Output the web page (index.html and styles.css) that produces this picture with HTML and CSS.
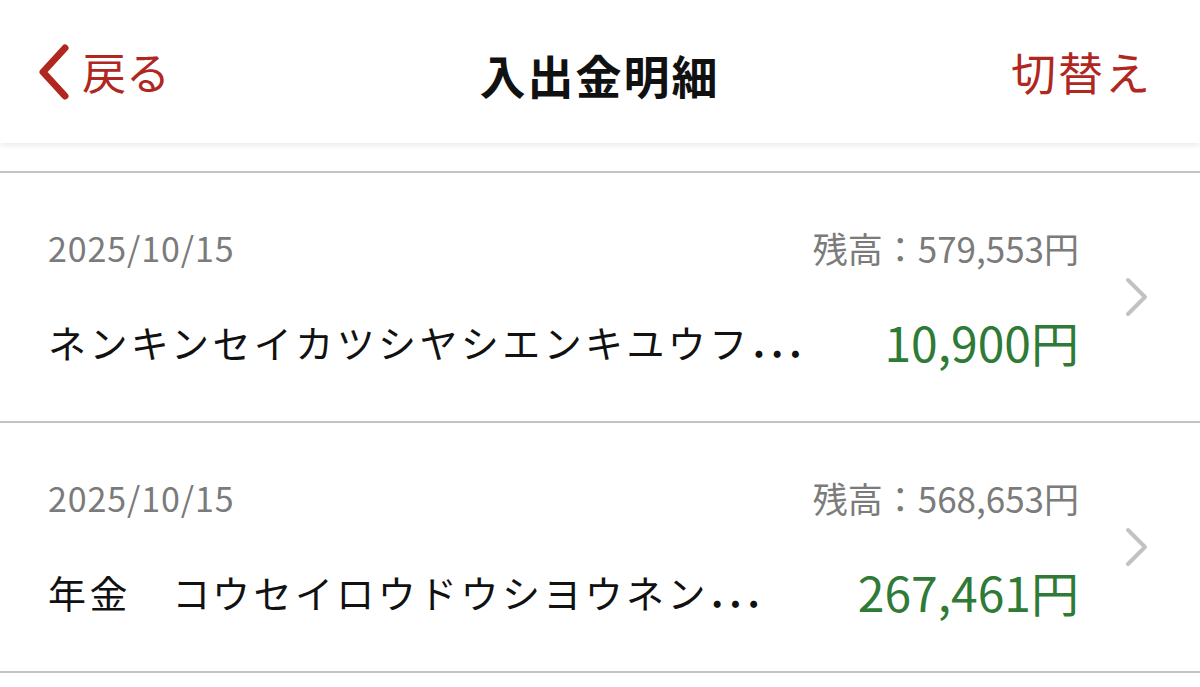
FILE: index.html
```html
<!DOCTYPE html>
<html lang="ja">
<head>
<meta charset="utf-8">
<title>入出金明細</title>
<link rel="stylesheet" href="styles.css">
</head>
<body>
<header class="header">
  <a class="back">
    <svg class="back-icon" width="36" height="58" viewBox="0 0 36 58"><path d="M30 5 L8 29 L30 53" fill="none" stroke="#b0271f" stroke-width="7" stroke-linecap="round" stroke-linejoin="round"/></svg>
    <span class="back-label">戻る</span>
  </a>
  <h1 class="title">入出金明細</h1>
  <a class="switch">切替え</a>
</header>
<div class="spacer"></div>
<ul class="list">
  <li class="item">
    <div class="item-main">
      <div class="line line-top">
        <span class="date">2025/10/15</span>
        <span class="balance">残高：579,553円</span>
      </div>
      <div class="line line-bottom">
        <span class="name">ネンキンセイカツシヤシエンキユウフ<span class="dots">...</span></span>
        <span class="amount">10,900円</span>
      </div>
    </div>
    <svg class="chev" width="26" height="40" viewBox="0 0 26 40"><path d="M4 3 L21 20 L4 37" fill="none" stroke="#c2c2c2" stroke-width="4" stroke-linecap="round" stroke-linejoin="round"/></svg>
  </li>
  <li class="item">
    <div class="item-main">
      <div class="line line-top">
        <span class="date">2025/10/15</span>
        <span class="balance">残高：568,653円</span>
      </div>
      <div class="line line-bottom">
        <span class="name">年金　コウセイロウドウシヨウネン<span class="dots">...</span></span>
        <span class="amount">267,461円</span>
      </div>
    </div>
    <svg class="chev" width="26" height="40" viewBox="0 0 26 40"><path d="M4 3 L21 20 L4 37" fill="none" stroke="#c2c2c2" stroke-width="4" stroke-linecap="round" stroke-linejoin="round"/></svg>
  </li>
</ul>
</body>
</html>
```

FILE: styles.css
```css
* { box-sizing: border-box; }
html, body {
  margin: 0;
  padding: 0;
  background: #ffffff;
  font-family: "Noto Sans CJK JP", "Noto Sans", sans-serif;
}
.header {
  height: 143px;
  display: flex;
  align-items: center;
  justify-content: space-between;
  padding: 0 48px 0 35px;
  background: #fff;
  box-shadow: 0 2px 6px rgba(0, 0, 0, 0.09);
  position: relative;
  z-index: 1;
}
.back {
  display: flex;
  align-items: center;
  gap: 11px;
  color: #b0271f;
  font-size: 44px;
  line-height: 1;
  width: 240px;
}
.back-icon { display: block; margin-top: 0; }
.back-label { margin-top: -2px; }
.title {
  margin: 0 0 0 12px;
  font-size: 46px;
  font-weight: 700;
  color: #111;
  line-height: 1;
  letter-spacing: 2px;
  margin-top: 4px;
}
.switch {
  width: 240px;
  text-align: right;
  color: #b0271f;
  font-size: 45px;
  line-height: 1;
  letter-spacing: 2px;
}
.spacer {
  height: 28px;
}
.list {
  list-style: none;
  margin: 0;
  padding: 0;
  border-top: 2px solid #c3c3c3;
}
.item {
  height: 250px;
  display: flex;
  align-items: center;
  border-bottom: 2px solid #c3c3c3;
  padding-left: 48px;
}
.item-main {
  flex: 1;
  min-width: 0;
  display: flex;
  flex-direction: column;
  padding-top: 0;
  gap: 43px;
  margin-top: -1px;
}
.line {
  display: flex;
  justify-content: space-between;
  align-items: center;
}
.line-top { height: 46px; }
.line-bottom { height: 56px; }
.date {
  font-size: 34px;
  color: #7b7b7b;
  letter-spacing: 0.9px;
}
.balance {
  font-size: 35px;
  color: #7b7b7b;
}
.name {
  font-size: 38px;
  color: #111;
  letter-spacing: 3.4px;
  white-space: nowrap;
}
.dots {
  letter-spacing: 6px;
  margin-left: 2px;
  font-weight: 700;
}
.amount {
  font-size: 48px;
  color: #2e7a36;
  white-space: nowrap;
}
.chev {
  display: block;
  margin: 0 50px 0 45px;
  flex: none;
}
```
